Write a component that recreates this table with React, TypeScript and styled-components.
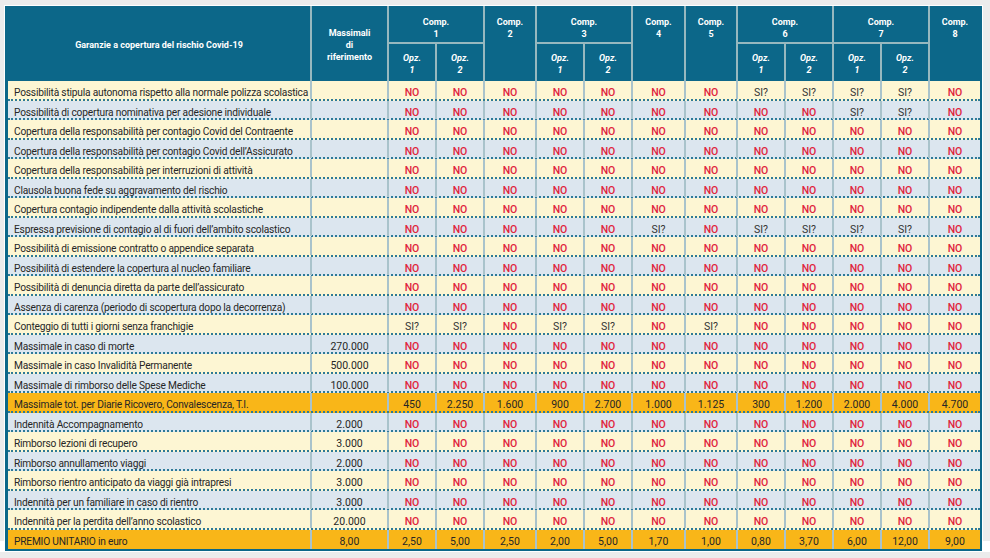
import React from "react";
import styled, { createGlobalStyle, css } from "styled-components";

const COLS = "304px 77px 48px 48px 52px 48px 48px 53px 52px 48px 48px 48px 48px 50px";
const TEAL = "#0c6789";
const HEAD_LINE = "#97b8bf";
const BODY_LINE = "#a9c3cb";

const GlobalStyle = createGlobalStyle`
  html, body { margin: 0; padding: 0; }
  body {
    background: linear-gradient(#ececec 0 541px, #ffffff 541px);
    font-family: Roboto, "Liberation Sans", Arial, sans-serif;
  }
`;

const Page = styled.div`
  padding: 5px 0 0 4px;
`;

const Frame = styled.div`
  border: 1px solid #ffffff;
  background: ${TEAL};
  padding: 0 2px 2px 3px;
  box-sizing: content-box;
  width: 972px;
`;

const Head = styled.div`
  display: grid;
  grid-template-columns: ${COLS};
  grid-template-rows: 38px 37px;
  color: #ffffff;
  font-weight: 700;
  font-size: 9px;
  line-height: 12px;
`;

type HeadKind = "center" | "comp" | "opz";

const HeadCell = styled.div<{ $col: string; $row: string; $kind?: HeadKind; $group?: boolean; $last?: boolean }>`
  grid-column: ${(p) => p.$col};
  grid-row: ${(p) => p.$row};
  display: flex;
  flex-direction: column;
  align-items: center;
  justify-content: ${(p) => (p.$kind === "comp" ? "flex-start" : "center")};
  padding-top: ${(p) => (p.$kind === "comp" ? "10px" : "3px")};
  text-align: center;
  box-sizing: border-box;
  border-right: ${(p) => (p.$last ? "none" : `2px solid ${HEAD_LINE}`)};
  border-bottom: ${(p) => (p.$group ? `2px solid ${HEAD_LINE}` : "none")};
  font-style: ${(p) => (p.$kind === "opz" ? "italic" : "normal")};
`;

const Body = styled.div`
  display: flex;
  flex-direction: column;
`;

type Tone = "cream" | "blue" | "orange";

const toneBg: Record<Tone, string> = {
  cream: "#fdf6d3",
  blue: "#dce6ef",
  orange: "#f9b618",
};

const Row = styled.div<{ $tone: Tone; $last?: boolean }>`
  display: grid;
  grid-template-columns: ${COLS};
  height: 19.5px;
  box-sizing: border-box;
  background: ${(p) => toneBg[p.$tone]};
  ${(p) =>
    !p.$last &&
    css`
      border-bottom: 2px dotted #2d7a97;
    `}
`;

const Label = styled.div`
  display: flex;
  align-items: center;
  padding: 5px 0 0 6px;
  font-size: 10.2px;
  letter-spacing: -0.2px;
  color: #262626;
  white-space: nowrap;
  border-right: 2px solid ${BODY_LINE};
`;

const Value = styled.div<{ $kind: "no" | "si" | "num"; $last?: boolean }>`
  display: flex;
  align-items: center;
  justify-content: center;
  padding-top: 5px;
  font-size: 10.5px;
  white-space: nowrap;
  border-right: ${(p) => (p.$last ? "none" : `2px solid ${BODY_LINE}`)};
  color: ${(p) => (p.$kind === "no" ? "#e0243d" : p.$kind === "si" ? "#333333" : "#262626")};
  font-weight: ${(p) => (p.$kind === "no" ? 500 : 400)};
`;

type RowData = { label: string; max?: string; values: string[]; tone?: Tone };

const N = "NO";
const S = "SI?";
const allNo = Array(12).fill(N);

const rows: RowData[] = [
  { label: "Possibilità stipula autonoma rispetto alla normale polizza scolastica", values: [N, N, N, N, N, N, N, S, S, S, S, N] },
  { label: "Possibilità di copertura nominativa per adesione individuale", values: [N, N, N, N, N, N, N, N, N, S, S, N] },
  { label: "Copertura della responsabilità per contagio Covid del Contraente", values: allNo },
  { label: "Copertura della responsabilità per contagio Covid dell’Assicurato", values: allNo },
  { label: "Copertura della responsabilità per interruzioni di attività", values: allNo },
  { label: "Clausola buona fede su aggravamento del rischio", values: allNo },
  { label: "Copertura contagio indipendente dalla attività scolastiche", values: allNo },
  { label: "Espressa previsione di contagio al di fuori dell’ambito scolastico", values: [N, N, N, N, N, S, N, S, S, S, S, N] },
  { label: "Possibilità di emissione contratto o appendice separata", values: allNo },
  { label: "Possibilità di estendere la copertura al nucleo familiare", values: allNo },
  { label: "Possibilità di denuncia diretta da parte dell’assicurato", values: allNo },
  { label: "Assenza di carenza (periodo di scopertura dopo la decorrenza)", values: allNo },
  { label: "Conteggio di tutti i giorni senza franchigie", values: [S, S, N, S, S, N, S, N, N, N, N, N] },
  { label: "Massimale in caso di morte", max: "270.000", values: allNo },
  { label: "Massimale in caso Invalidità Permanente", max: "500.000", values: allNo },
  { label: "Massimale di rimborso delle Spese Mediche", max: "100.000", values: allNo },
  {
    label: "Massimale tot. per Diarie Ricovero, Convalescenza, T.I.",
    values: ["450", "2.250", "1.600", "900", "2.700", "1.000", "1.125", "300", "1.200", "2.000", "4.000", "4.700"],
    tone: "orange",
  },
  { label: "Indennità Accompagnamento", max: "2.000", values: allNo },
  { label: "Rimborso lezioni di recupero", max: "3.000", values: allNo },
  { label: "Rimborso annullamento viaggi", max: "2.000", values: allNo },
  { label: "Rimborso rientro anticipato da viaggi già intrapresi", max: "3.000", values: allNo },
  { label: "Indennità per un familiare in caso di rientro", max: "3.000", values: allNo },
  { label: "Indennità per la perdita dell’anno scolastico", max: "20.000", values: allNo },
  {
    label: "PREMIO UNITARIO in euro",
    max: "8,00",
    values: ["2,50", "5,00", "2,50", "2,00", "5,00", "1,70", "1,00", "0,80", "3,70", "6,00", "12,00", "9,00"],
    tone: "orange",
  },
];

const kindOf = (v: string): "no" | "si" | "num" => (v === N ? "no" : v === S ? "si" : "num");

function Header() {
  return (
    <Head>
      <HeadCell $col="1" $row="1 / 3">Garanzie a copertura del rischio Covid-19</HeadCell>
      <HeadCell $col="2" $row="1 / 3">
        <span>Massimali</span>
        <span>di</span>
        <span>riferimento</span>
      </HeadCell>
      <HeadCell $col="3 / 5" $row="1" $kind="comp" $group><span>Comp.</span><span>1</span></HeadCell>
      <HeadCell $col="3" $row="2" $kind="opz"><span>Opz.</span><span>1</span></HeadCell>
      <HeadCell $col="4" $row="2" $kind="opz"><span>Opz.</span><span>2</span></HeadCell>
      <HeadCell $col="5" $row="1 / 3" $kind="comp"><span>Comp.</span><span>2</span></HeadCell>
      <HeadCell $col="6 / 8" $row="1" $kind="comp" $group><span>Comp.</span><span>3</span></HeadCell>
      <HeadCell $col="6" $row="2" $kind="opz"><span>Opz.</span><span>1</span></HeadCell>
      <HeadCell $col="7" $row="2" $kind="opz"><span>Opz.</span><span>2</span></HeadCell>
      <HeadCell $col="8" $row="1 / 3" $kind="comp"><span>Comp.</span><span>4</span></HeadCell>
      <HeadCell $col="9" $row="1 / 3" $kind="comp"><span>Comp.</span><span>5</span></HeadCell>
      <HeadCell $col="10 / 12" $row="1" $kind="comp" $group><span>Comp.</span><span>6</span></HeadCell>
      <HeadCell $col="10" $row="2" $kind="opz"><span>Opz.</span><span>1</span></HeadCell>
      <HeadCell $col="11" $row="2" $kind="opz"><span>Opz.</span><span>2</span></HeadCell>
      <HeadCell $col="12 / 14" $row="1" $kind="comp" $group><span>Comp.</span><span>7</span></HeadCell>
      <HeadCell $col="12" $row="2" $kind="opz"><span>Opz.</span><span>1</span></HeadCell>
      <HeadCell $col="13" $row="2" $kind="opz"><span>Opz.</span><span>2</span></HeadCell>
      <HeadCell $col="14" $row="1 / 3" $kind="comp" $last><span>Comp.</span><span>8</span></HeadCell>
    </Head>
  );
}

export default function App() {
  return (
    <>
      <GlobalStyle />
      <Page>
        <Frame>
          <Header />
          <Body>
            {rows.map((r, i) => {
              const tone: Tone = r.tone ?? (i % 2 === 0 ? "cream" : "blue");
              return (
                <Row key={i} $tone={tone} $last={i === rows.length - 1}>
                  <Label>{r.label}</Label>
                  <Value $kind="num">{r.max ?? ""}</Value>
                  {r.values.map((v, j) => (
                    <Value key={j} $kind={kindOf(v)} $last={j === r.values.length - 1}>
                      {v}
                    </Value>
                  ))}
                </Row>
              );
            })}
          </Body>
        </Frame>
      </Page>
    </>
  );
}
